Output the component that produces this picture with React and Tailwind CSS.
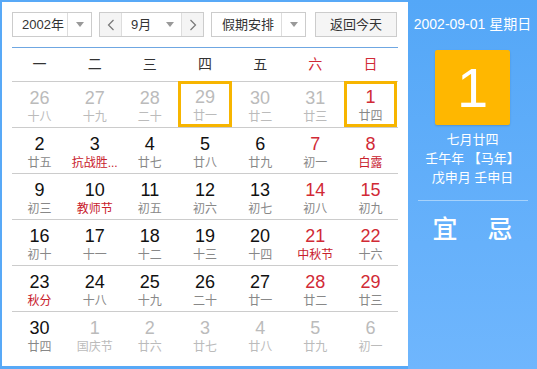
import React from "react";

const weekdays = ["一", "二", "三", "四", "五", "六", "日"];

// [day, lunar, dim, festival]
const days = [
  [26, "十八", true], [27, "十九", true], [28, "二十", true], [29, "廿一", true], [30, "廿二", true], [31, "廿三", true], [1, "廿四", false],
  [2, "廿五"], [3, "抗战胜...", false, true], [4, "廿七"], [5, "廿八"], [6, "廿九"], [7, "初一"], [8, "白露", false, true],
  [9, "初三"], [10, "教师节", false, true], [11, "初五"], [12, "初六"], [13, "初七"], [14, "初八"], [15, "初九"],
  [16, "初十"], [17, "十一"], [18, "十二"], [19, "十三"], [20, "十四"], [21, "中秋节", false, true], [22, "十六"],
  [23, "秋分", false, true], [24, "十八"], [25, "十九"], [26, "二十"], [27, "廿一"], [28, "廿二"], [29, "廿三"],
  [30, "廿四"], [1, "国庆节", true], [2, "廿六", true], [3, "廿七", true], [4, "廿八", true], [5, "廿九", true], [6, "初一", true],
];

const Caret = () => (
  <span className="w-0 h-0 border-l-[4px] border-r-[4px] border-t-[5px] border-l-transparent border-r-transparent border-t-[#999]" />
);

const Cell = ({ d, i, row }) => {
  const [day, lunar, dim, fest] = d;
  const col = i % 7;
  const weekend = col >= 5;
  const selected = i === 3 || i === 6;
  let numColor = weekend ? "text-[#d12a36]" : "text-[#111]";
  let lunarColor = fest ? "text-[#c8202c]" : "text-[#888]";
  if (dim) {
    numColor = "text-[#bbb]";
    lunarColor = "text-[#bbb]";
  }
  return (
    <div className={`h-[46px] ${row < 5 ? "border-b border-[#ccc]" : ""}`}>
      <div
        className={`mx-[1px] h-[46px] border-[3px] flex flex-col items-center ${
          selected ? "border-[#f7b500] -mt-px" : "border-transparent"
        }`}
      >
        <span className={`mt-[2px] text-[18px] leading-[22px] ${numColor}`}>{day}</span>
        <span className={`text-[12px] leading-[16px] whitespace-nowrap ${lunarColor}`}>{lunar}</span>
      </div>
    </div>
  );
};

export default function App() {
  return (
    <div
      className="w-[537px] h-[369px] flex overflow-hidden"
      style={{ fontFamily: '"Liberation Sans", "Noto Sans CJK SC", sans-serif' }}
    >
      <div className="w-[408px] h-[369px] border-t-2 border-l-2 border-b-[3px] border-[#58a9f7] bg-white px-[10px] pt-[10px]">
        {/* controls */}
        <div className="flex h-[25px] text-[13px] text-[#333]">
          <div className="w-[80px] flex border border-[#ccc] bg-white">
            <span className="flex-1 flex items-center pl-[9px]">2002年</span>
            <span className="w-[24px] border-l border-[#ddd] flex items-center justify-center"><Caret /></span>
          </div>
          <div className="w-[105px] ml-[7px] flex border border-[#ccc] bg-white">
            <span className="w-[22px] bg-[#f4f4f4] border-r border-[#ddd] flex items-center justify-center">
              <svg width="8" height="12" viewBox="0 0 8 12"><path d="M6.5 1 L1.5 6 L6.5 11" fill="none" stroke="#777" strokeWidth="1.2" /></svg>
            </span>
            <span className="flex-1 flex items-center pl-[9px]">9月</span>
            <span className="w-[22px] flex items-center justify-center"><Caret /></span>
            <span className="w-[22px] bg-[#f4f4f4] border-l border-[#ddd] flex items-center justify-center">
              <svg width="8" height="12" viewBox="0 0 8 12"><path d="M1.5 1 L6.5 6 L1.5 11" fill="none" stroke="#777" strokeWidth="1.2" /></svg>
            </span>
          </div>
          <div className="w-[95px] ml-[7px] flex border border-[#ccc] bg-white">
            <span className="flex-1 flex items-center pl-[10px]">假期安排</span>
            <span className="w-[24px] border-l border-[#ddd] flex items-center justify-center"><Caret /></span>
          </div>
          <div className="w-[82px] ml-[9px] border border-[#ccc] bg-[#f5f5f5] flex items-center justify-center">
            返回今天
          </div>
        </div>
        <div className="mt-[10px] h-px bg-[#6fa7e2]" />
        {/* weekday header */}
        <div className="grid grid-cols-7 h-[34px] border-b border-[#ccc] text-[14px]">
          {weekdays.map((w, i) => (
            <div key={w} className={`flex items-center justify-center ${i >= 5 ? "text-[#d12a36]" : "text-[#333]"}`}>
              {w}
            </div>
          ))}
        </div>
        <div className="grid grid-cols-7">
          {days.map((d, i) => (
            <Cell key={i} d={d} i={i} row={Math.floor(i / 7)} />
          ))}
        </div>
      </div>
      {/* right panel */}
      <div className="flex-1 h-[369px] bg-gradient-to-b from-[#54a7f7] to-[#6fb6fd] flex flex-col items-center text-white">
        <div className="mt-[15px] text-[14px] leading-[18px]">2002-09-01 星期日</div>
        <div className="mt-[17px] w-[75px] h-[75px] bg-[#ffb700] rounded-[2px] shadow-[0_1px_2px_rgba(0,0,0,0.15)] flex items-center justify-center text-[56px] leading-none">
          1
        </div>
        <div className="mt-[5px] text-[13px] leading-[19px] text-center">
          <div>七月廿四</div>
          <div>壬午年 【马年】</div>
          <div>戊申月 壬申日</div>
        </div>
        <div className="mt-[13px] w-[110px] h-px bg-[#a6d2fb]" />
        <div className="mt-[13px] flex gap-[30px] text-[25px] leading-[30px] font-medium">
          <span>宜</span>
          <span>忌</span>
        </div>
      </div>
    </div>
  );
}
